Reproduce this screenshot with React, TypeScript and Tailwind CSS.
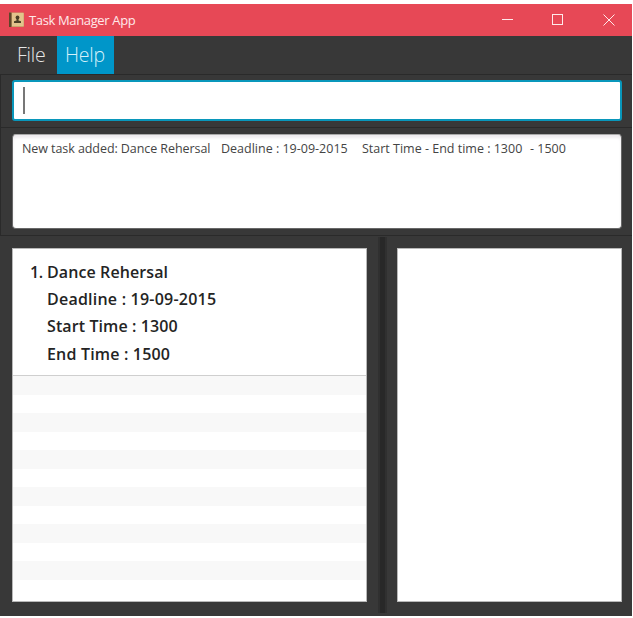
const stripes = Array.from({ length: 12 }, (_, i) => i);

function AppIcon() {
  return (
    <svg width="16" height="16" viewBox="0 0 16 16" className="shrink-0">
      <rect x="0" y="0.5" width="15" height="14.5" rx="1" fill="#c9a56c" />
      <rect x="3" y="1" width="11.5" height="13" fill="#e3c48c" />
      <rect x="0" y="0.5" width="2.5" height="14.5" fill="#5f4528" />
      <circle cx="8.5" cy="5.500" r="1.9" fill="#4c4026" />
      <path d="M7.500 6h2v2.500l2.500 .8v1.700h-7V9.300l2.500-.8z" fill="#4c4026" />
    </svg>
  );
}

function TitleBar() {
  return (
    <header className="flex h-8 shrink-0 items-center bg-[#e74856] pl-[9px] pr-[17px]">
      <AppIcon />
      <h1 className="ml-1 mt-px whitespace-nowrap text-[13px] tracking-[-0.36px] text-[#ffe9ea]">Task Manager App</h1>
      <div className="ml-auto flex items-center gap-[39px]">
        <svg width="12" height="12" viewBox="0 0 12 12" stroke="#ffe9ea" fill="none">
          <path d="M1 5.500H12" />
        </svg>
        <svg width="12" height="12" viewBox="0 0 12 12" stroke="#ffe9ea" fill="none">
          <rect x="0.500" y="0.500" width="10" height="10" />
        </svg>
        <svg width="12" height="12" viewBox="0 0 12 12" stroke="#ffe9ea" fill="none">
          <path d="M0.500 0.500L11.500 11.500M11.500 0.500L0.500 11.500" />
        </svg>
      </div>
    </header>
  );
}

function MenuBar() {
  return (
    <nav className="flex h-[38px] shrink-0 text-[19.500px] font-light leading-[38px] text-[#e6e6e6]">
      <span className="w-[57px] pl-[17px] tracking-[-0.200px]">File</span>
      <span className="w-[57px] bg-[#0096c9] pl-2 tracking-[-0.200px] text-[#d5f1fa]">Help</span>
    </nav>
  );
}

function TaskCard() {
  return (
    <article className="flex h-[127px] border-b border-[#cfcfcf] bg-white pl-[17px] pt-2.5 text-[16px] font-semibold leading-[27.200px] text-[#242424]">
      <span className="w-[17px] shrink-0 tracking-[-0.5px]">1.</span>
      <div className="whitespace-nowrap">
        <p className="tracking-[0.100px]">Dance Rehersal</p>
        <p className="tracking-[0.220px]">Deadline : 19-09-2015</p>
        <p className="tracking-[0.100px]">Start Time : 1300</p>
        <p className="tracking-[0.180px]">End Time : 1500</p>
      </div>
    </article>
  );
}

export default function App() {
  return (
    <div className="h-[618px] w-[633px] overflow-hidden bg-white pt-1 font-['Open_Sans','Noto_Sans',sans-serif]">
      <main className="flex h-[612px] w-[632px] flex-col bg-[#383838]">
        <TitleBar />
        <MenuBar />
        <section className="flex h-[54px] shrink-0 border-y border-l border-[#2a2a2a] pl-[11px] pr-[10px] pt-[5px]">
          <div className="flex h-[41px] flex-1 items-center rounded-[3px] border-2 border-[#0997bb] bg-white pl-[9px]">
            <div className="h-[27px] w-[2px] bg-[#777]" />
          </div>
        </section>
        <section className="h-[108px] shrink-0 border-b border-l border-[#2a2a2a] pl-[11px] pr-[10px] pt-[6px]">
          <div className="flex h-[95px] whitespace-nowrap rounded-[4px] border border-[#686868] border-t-[#aaa] bg-white pl-[9px] pt-[5px] text-[12.500px] leading-[18px] text-[#444] shadow-[inset_0_3px_3px_#eeebee]">
            <span className="w-[199px] tracking-[-0.070px]">New task added: Dance Rehersal</span>
            <span className="w-[141px]">Deadline : 19-09-2015</span>
            <span className="w-[168px]">Start Time - End time : 1300</span>
            <span>- 1500</span>
          </div>
        </section>
        <section className="flex h-[380px] shrink-0 pl-3 pr-[10px]">
          <div className="mt-3 h-[354px] w-[355px] overflow-hidden border border-[#b8b8b8] bg-white">
            <TaskCard />
            {stripes.map((i) => (
              <div key={i} className="h-[18.500px] odd:bg-white even:bg-[#f8f8f8]" />
            ))}
          </div>
          <div className="ml-[11px] mt-px h-[376px] w-[9px] border-x-2 border-[#303030] bg-[#282828]" />
          <div className="ml-[10px] mt-3 h-[354px] flex-1 border border-[#b8b8b8] bg-white" />
        </section>
      </main>
    </div>
  );
}
